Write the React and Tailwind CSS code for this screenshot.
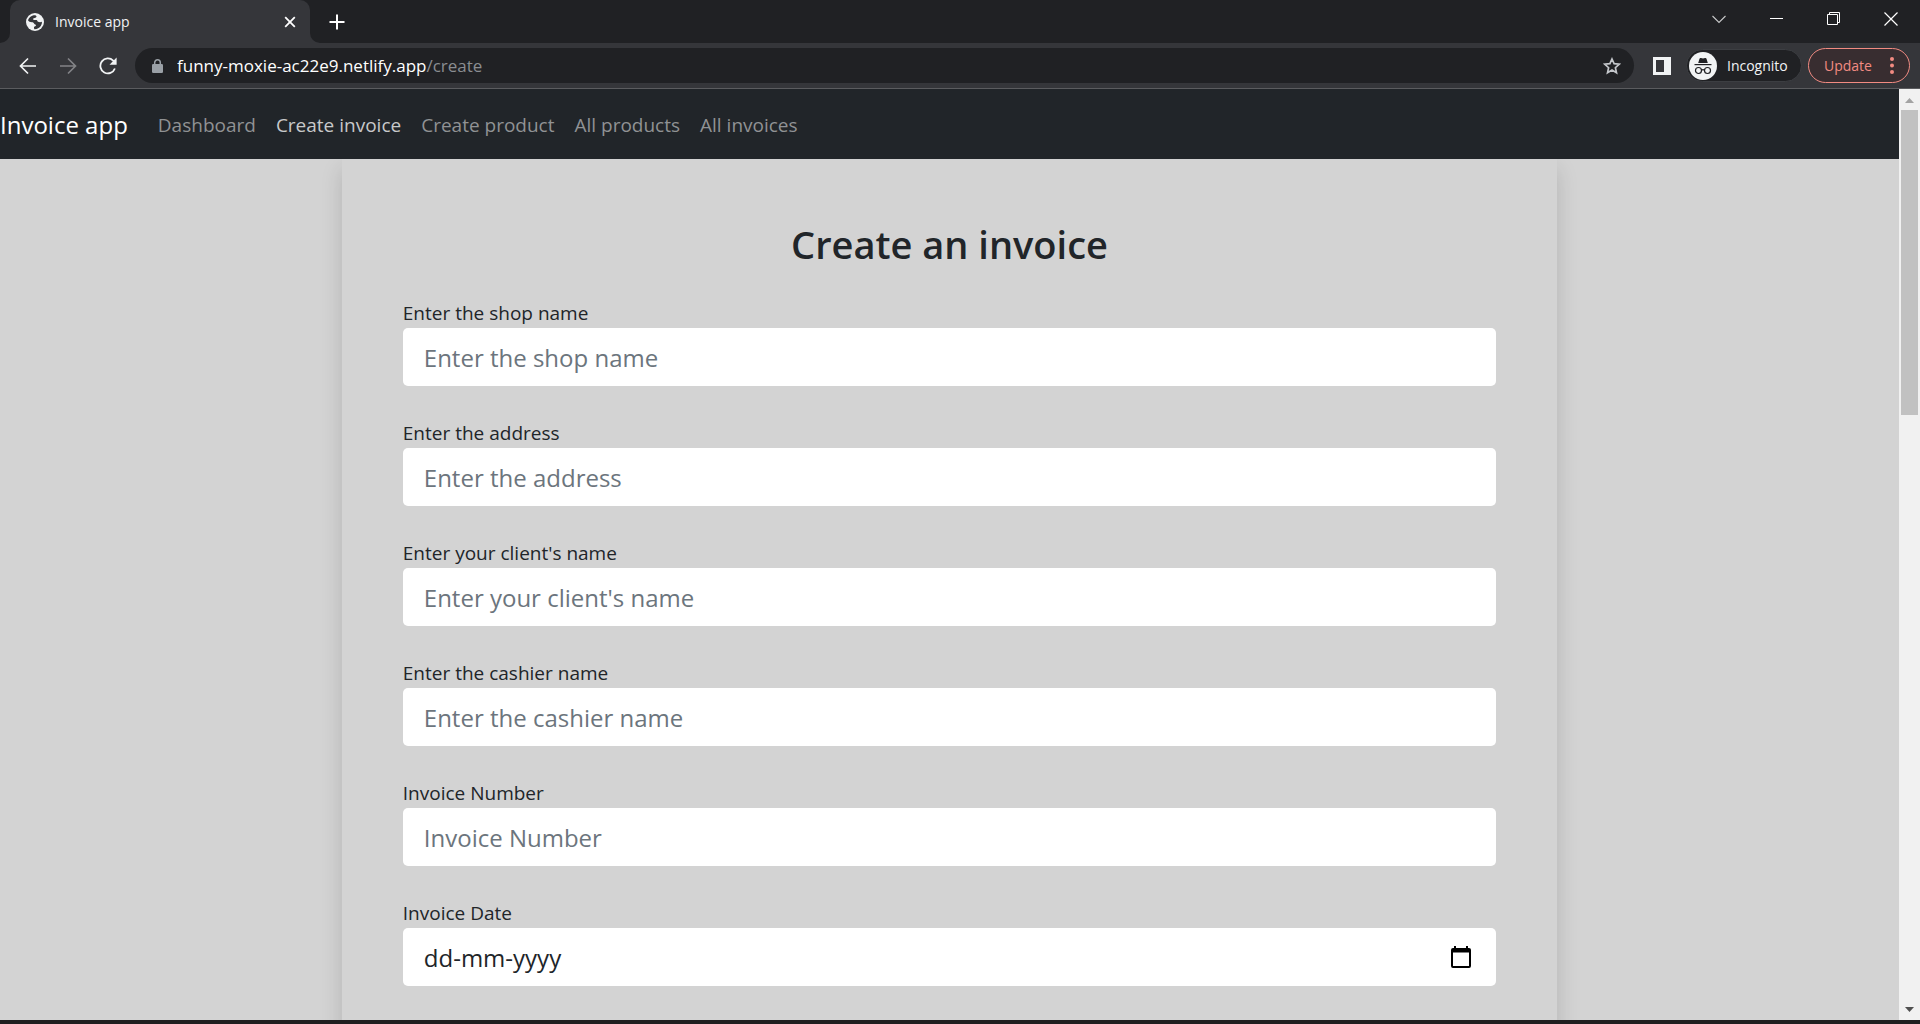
import React from "react";

const fields = [
  { id: "shop", label: "Enter the shop name" },
  { id: "address", label: "Enter the address" },
  { id: "client", label: "Enter your client's name" },
  { id: "cashier", label: "Enter the cashier name" },
  { id: "number", label: "Invoice Number" },
];

const links = ["Dashboard", "Create invoice", "Create product", "All products", "All invoices"];

function TabStrip() {
  return (
    <div className="flex h-[43px] shrink-0 bg-[#202124] pl-2.5 text-[#f1f3f4]">
      <div className="relative flex w-[300px] items-center rounded-t-[10px] bg-[#35363a] pr-2.5 pl-4">
        <svg className="absolute bottom-0 -left-2.5 size-2.5" viewBox="0 0 10 10" fill="#35363a" aria-hidden="true">
          <path d="M10 0A10 10 0 0 1 0 10H10Z" />
        </svg>
        <svg className="absolute -right-2.5 bottom-0 size-2.5" viewBox="0 0 10 10" fill="#35363a" aria-hidden="true">
          <path d="M0 0A10 10 0 0 0 10 10H0Z" />
        </svg>
        <svg className="size-[18px]" viewBox="0 0 18 18" aria-hidden="true">
          <circle cx="9" cy="9" r="9" fill="#f1f3f4" />
          <path
            d="M7.500 2.200C5 2.800 2.800 4.700 2 7.300C2.500 8.600 4.200 9.200 6 9.200C7.300 9.200 7.800 9.800 8.200 10.800C8.600 11.600 10 11.200 10 12.300C10 13.200 8.700 13.300 8.200 13.800C7.800 14.500 8 15.500 8.400 16.200C11 16.300 13.500 15.100 14.900 12.700C15.800 11.300 16 10 15.900 8.800C14.700 9.500 13 9.300 12 8.800C11 8.200 11.500 7.200 10.500 7.100C9.200 7 8 7.400 7.200 6.500C6.600 5.700 7.600 5 8.600 4.900C9.600 4.800 10.500 4.400 10.500 3.300C10.500 2.700 9.200 2 7.500 2.200Z"
            fill="#35363a"
          />
        </svg>
        <span className="ml-[11px] flex-1 truncate text-[14px]">Invoice app</span>
        <button type="button" aria-label="Close tab" className="grid size-5 place-items-center">
          <svg className="size-3" viewBox="0 0 12 12" fill="none" stroke="#fff" strokeWidth="1.8">
            <path d="M1.200 1.200L10.800 10.800M10.800 1.200L1.200 10.800" />
          </svg>
        </button>
      </div>
      <button type="button" aria-label="New tab" className="ml-4 grid w-[22px] place-items-center">
        <svg className="size-4" viewBox="0 0 16 16" fill="none" stroke="#fff" strokeWidth="2">
          <path d="M8 .5V15.500M.5 8H15.500" />
        </svg>
      </button>
      <div className="ml-auto flex h-[37px]">
        <button type="button" aria-label="Search tabs" className="grid w-14 place-items-center">
          <svg className="size-[14px]" viewBox="0 0 14 14" fill="none" stroke="#c8c9ca" strokeWidth="1.1">
            <path d="M.5 4L7 10.500L13.500 4" />
          </svg>
        </button>
        <button type="button" aria-label="Minimize" className="grid w-[58px] place-items-center">
          <span className="h-px w-[13px] bg-white" />
        </button>
        <button type="button" aria-label="Restore" className="grid w-[57px] place-items-center">
          <svg className="size-[14px]" viewBox="0 0 14 14" fill="none" stroke="#fff" strokeWidth="1">
            <path d="M.5 2.500H10.500V12.500H.5ZM2.500 2.500V.5H12.500V10.500H10.500" />
          </svg>
        </button>
        <button type="button" aria-label="Close window" className="grid w-[58px] place-items-center">
          <svg className="size-[14px]" viewBox="0 0 14 14" fill="none" stroke="#fff" strokeWidth="1.2">
            <path d="M.5 .5L13.500 13.500M13.500 .5L.5 13.500" />
          </svg>
        </button>
      </div>
    </div>
  );
}

function Toolbar() {
  return (
    <div className="flex h-[46px] shrink-0 items-center border-b border-[#5b5c5f] bg-[#35363a] pr-2.5 pl-[18px]">
      <div className="flex gap-5">
        <button type="button" aria-label="Back" className="grid size-5 place-items-center">
          <svg className="size-[18px]" viewBox="0 0 18 18" fill="none" stroke="#f1f3f4" strokeWidth="1.700">
            <path d="M17 9H1.500M9 1.500L1.500 9L9 16.500" />
          </svg>
        </button>
        <button type="button" aria-label="Forward" className="grid size-5 place-items-center">
          <svg className="size-[18px]" viewBox="0 0 18 18" fill="none" stroke="#828386" strokeWidth="1.700">
            <path d="M1 9H16.500M9 1.500L16.500 9L9 16.500" />
          </svg>
        </button>
        <button type="button" aria-label="Reload" className="grid size-5 place-items-center">
          <svg className="size-[18px]" viewBox="0 0 18 18">
            <path d="M15.900 11.500A7.500 7.500 0 1 1 14.200 3.600L15.500 5.200" fill="none" stroke="#f1f3f4" strokeWidth="1.800" />
            <path d="M17.600 .6V7.700H10.500Z" fill="#f1f3f4" />
          </svg>
        </button>
      </div>
      <div className="ml-[17px] flex h-[35px] flex-1 items-center rounded-full bg-[#202124] pr-3 pl-[17px]">
        <svg className="h-[14px] w-[11px]" viewBox="0 0 11 14" aria-hidden="true">
          <path d="M2.700 6V3.600A2.800 2.800 0 0 1 8.300 3.600V6" fill="none" stroke="#9aa0a6" strokeWidth="1.500" />
          <rect y="5" width="11" height="9" rx="1.300" fill="#9aa0a6" />
        </svg>
        <span className="ml-[14px] flex-1 truncate text-[17px] text-white">
          funny-moxie-ac22e9.netlify.app<span className="text-[#8a8d91]">/create</span>
        </span>
        <button type="button" aria-label="Bookmark" className="grid size-5 place-items-center">
          <svg className="size-[18px]" viewBox="0 0 18 18" fill="none" stroke="#c4c7cb" strokeWidth="1.700">
            <path d="M9 2L11.100 6.700L16.300 7.200L12.400 10.700L13.500 15.700L9 13.100L4.500 15.700L5.600 10.700L1.700 7.200L6.900 6.700Z" />
          </svg>
        </button>
      </div>
      <button type="button" aria-label="Side panel" className="ml-[18px] grid size-5 place-items-center">
        <svg className="size-[18px]" viewBox="0 0 18 18">
          <path d="M0 0H18V18H0ZM3 3V15H11V3Z" fill="#f1f3f4" fillRule="evenodd" />
        </svg>
      </button>
      <button
        type="button"
        className="ml-[14px] flex h-[33px] w-[116px] items-center rounded-full border border-[#3c3e42] bg-[#202124] pl-0.5 text-[14px] text-[#f1f3f4]"
      >
        <svg className="mr-2.5 size-7" viewBox="0 0 28 28" aria-hidden="true">
          <circle cx="14" cy="14" r="14" fill="#f1f3f4" />
          <path d="M9.200 11L10.500 6.700Q10.900 5.600 12 6L14 6.600L16 6Q17.100 5.600 17.500 6.700L18.800 11Z" fill="#202124" />
          <path d="M5.500 12.600H22.500" stroke="#202124" strokeWidth="1.200" />
          <g fill="none" stroke="#202124" strokeWidth="1.200">
            <circle cx="9.500" cy="18.500" r="3" />
            <circle cx="18.500" cy="18.500" r="3" />
            <path d="M12.400 18.200Q14 17.200 15.600 18.200" />
          </g>
        </svg>
        Incognito
      </button>
      <button
        type="button"
        className="ml-1.5 flex h-[35px] w-[102px] items-center justify-between rounded-full border border-[#f28b82] bg-[#382d30] pr-[15px] pl-[15px] text-[14px] text-[#f28b82]"
      >
        Update
        <svg className="h-[17px] w-1" viewBox="0 0 4 17" fill="#f28b82" aria-hidden="true">
          <circle cx="2" cy="2" r="2" />
          <circle cx="2" cy="8.500" r="2" />
          <circle cx="2" cy="15" r="2" />
        </svg>
      </button>
    </div>
  );
}

function Navbar() {
  return (
    <nav className="flex h-[70px] items-center bg-[#212529] pt-0.5">
      <a href="#home" className="mr-[30px] text-[24px] text-white">
        Invoice app
      </a>
      <div className="flex gap-5 text-[19px]">
        {links.map((name) => (
          <a
            key={name}
            href="#page"
            className={name === "Create invoice" ? "text-[#c8c9ca]" : "text-[#909294]"}
          >
            {name}
          </a>
        ))}
      </div>
    </nav>
  );
}

const inputClass = "h-[58px] w-full rounded-[5px] bg-white px-[21px] text-[24px] outline-none";

function InvoiceForm() {
  return (
    <form className="mx-auto w-[64%] px-[61px] pt-[57px] pb-24 text-[#212529] shadow-[0_10px_20px_rgba(0,0,0,0.15)]">
      <h1 className="text-center text-[38px] leading-[56px] font-semibold">Create an invoice</h1>
      <div className="mt-[26px] flex flex-col gap-8">
        {fields.map((f) => (
          <div key={f.id}>
            <label htmlFor={f.id} className="block text-[19px] leading-[30px]">
              {f.label}
            </label>
            <input id={f.id} type="text" placeholder={f.label} className={`${inputClass} placeholder:text-[#6c757d]`} />
          </div>
        ))}
        <div>
          <label htmlFor="date" className="block text-[19px] leading-[30px]">
            Invoice Date
          </label>
          <div className="relative">
            <input
              id="date"
              type="text"
              placeholder="dd-mm-yyyy"
              className={`${inputClass} placeholder:text-[#212529]`}
            />
            <button
              type="button"
              aria-label="Open calendar"
              className="absolute inset-y-0 right-[25px] grid place-items-center"
            >
              <svg className="h-[22px] w-5" viewBox="0 0 20 22">
                <path
                  d="M3 0H5V2H15V0H17V2H18A2 2 0 0 1 20 4V20A2 2 0 0 1 18 22H2A2 2 0 0 1 0 20V4A2 2 0 0 1 2 2H3ZM2 6.500V20H18V6.500Z"
                  fill="#000"
                  fillRule="evenodd"
                />
              </svg>
            </button>
          </div>
        </div>
      </div>
    </form>
  );
}

function Scrollbar() {
  return (
    <div className="flex w-[21px] shrink-0 flex-col items-center bg-[#f1f1f1]" aria-hidden="true">
      <div className="grid h-[21px] place-items-center pt-0.5">
        <svg className="h-[5px] w-[9px]" viewBox="0 0 9 5" fill="#a3a3a3">
          <path d="M4.500 0L9 5H0Z" />
        </svg>
      </div>
      <div className="h-[305px] w-[17px] bg-[#c1c1c1]" />
      <div className="mt-auto grid h-[21px] place-items-center">
        <svg className="h-[5px] w-[9px]" viewBox="0 0 9 5" fill="#505050">
          <path d="M0 0H9L4.500 5Z" />
        </svg>
      </div>
    </div>
  );
}

export default function App() {
  return (
    <div className="flex h-screen flex-col overflow-hidden border-b-4 border-[#1f1f20] bg-[#d3d3d3] font-['Open_Sans','Segoe_UI',sans-serif]">
      <TabStrip />
      <Toolbar />
      <div className="flex min-h-0 flex-1">
        <main className="min-w-0 flex-1 overflow-hidden">
          <Navbar />
          <div className="overflow-hidden">
            <InvoiceForm />
          </div>
        </main>
        <Scrollbar />
      </div>
    </div>
  );
}
